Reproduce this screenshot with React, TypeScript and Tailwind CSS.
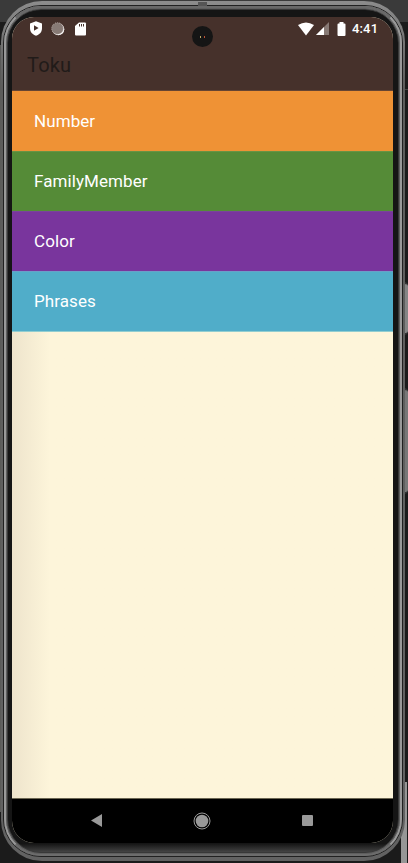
import React from "react";

const rows = [
  { label: "Number", style: "bg-[#ef9235] border-[#ef9235]" },
  { label: "FamilyMember", style: "bg-[#558b37] border-[#689344]" },
  { label: "Color", style: "bg-[#79359d] border-[#79449b]" },
  { label: "Phrases", style: "bg-[#50adc9] border-[#6a9fc8]" },
];

function StatusBar() {
  return (
    <div className="flex h-[23px] items-center text-white">
      <svg className="ml-[17px] h-[15px] w-[14px]" viewBox="0 0 14 15">
        <path d="M7 .3 13 2.500V7c0 4-2.3 6.500-6 7.700C3.300 13.500 1 11 1 7V2.500Z" fill="#fff" />
        <path d="M5 4.300v5.500L9.600 7Z" fill="#46312b" />
      </svg>
      <svg className="ml-[8px] h-[14px] w-[14px]" viewBox="0 0 14 14">
        <circle cx="7.300" cy="7.300" r="6" fill="#fff" />
        <circle cx="6.500" cy="6.500" r="5.800" fill="#877a75" stroke="#b8aca7" strokeWidth="1" strokeDasharray="1 1" />
      </svg>
      <svg className="ml-[10px] h-[14px] w-[12px]" viewBox="0 0 12 14">
        <path d="M4 .500h6q1 0 1 1v11q0 1-1 1h-9q-1 0-1-1V4Z" fill="#fff" />
        <path d="M4.500 2v2.500M6.500 2v2.500M8.500 2v2.500" stroke="#46312b" />
      </svg>
      <svg className="ml-auto h-[14px] w-[16px]" viewBox="0 0 16 14">
        <path d="M0 3Q8-2 16 3L8 13.500Z" fill="#fff" />
      </svg>
      <svg className="ml-[2px] h-[13px] w-[13px]" viewBox="0 0 13 13">
        <path d="M13 0v13H0Z" fill="#877a75" />
        <path d="M8 5v8H0Z" fill="#fff" />
      </svg>
      <svg className="ml-[8px] h-[14px] w-[9px]" viewBox="0 0 9 14">
        <path d="M2.500 0h4v1.500h1q1 0 1 1V13q0 1-1 1h-6q-1 0-1-1V2.500q0-1 1-1h1Z" fill="#fff" />
      </svg>
      <span className="mr-[15px] ml-[6px] w-[26px] whitespace-nowrap text-[13px] leading-[16px] font-medium tracking-[0.15px]">4:41</span>
    </div>
  );
}

export default function App() {
  return (
    <div className="relative h-[863px] w-[408px] overflow-hidden bg-[#1b1b1b] font-[Roboto,sans-serif]">
      <div className="absolute top-0 left-0 h-[22px] w-full bg-[#3a3a3a]" />
      <div className="absolute top-[45px] left-0 h-[767px] w-[4px] bg-[#5b5b59]" />
      <div className="absolute top-[89px] left-[404px] h-px w-[4px] bg-[#444]" />
      <div className="absolute top-[282px] left-[403px] h-[53px] w-[5px] rounded-r-sm border-y-2 border-[#343434] bg-[#858585]" />
      <div className="absolute top-[388px] left-[403px] h-[106px] w-[5px] rounded-r-sm border-y-2 border-[#343434] bg-[#777]" />
      <div className="absolute top-[782px] left-[401px] h-[81px] w-[6px] bg-[#969696]" />

      <div className="relative top-px ml-px h-[860px] w-[404px] rounded-[41px] bg-linear-to-b from-[#8c8c8c] via-[#5c5c5b] via-10% to-[#626262] px-[2px] py-[4px]">
        <div className="h-full rounded-[38px] border border-[#202020]">
          <div className="h-full rounded-[37px] border-2 border-x-[#999] border-t-[#686868] border-b-[#6c6c6c]">
            <div className="h-full rounded-[35px] border border-[#5e5e5e]">
              <div className="h-full rounded-[34px] border border-[#383838] bg-linear-to-b from-[#151515] from-99% to-[#444] pt-[7px] pr-[5px] pb-[9px] pl-[4px]">
                <main className="flex h-[826px] w-[381px] flex-col overflow-hidden rounded-[22px] bg-[#fdf5da]">
                  <header className="h-[74px] border-b border-[#654433] bg-[#46312b]">
                    <StatusBar />
                    <h1 className="pt-[11px] pl-[15px] text-[20px] leading-[28px] tracking-[0.2px] text-[#211b19]">Toku</h1>
                  </header>
                  <div className="flex grow flex-col bg-linear-to-r from-[#eee4cc] via-[#fdf5da] via-10% to-[#fdf5da]">
                    {rows.map((row) => (
                      <div key={row.label} className={`flex h-[60px] items-center border-t pl-[22px] text-[17px] tracking-[0.08px] text-white ${row.style}`}>
                        {row.label}
                      </div>
                    ))}
                    <div className="h-px bg-[#91cdd0]" />
                  </div>
                  <nav className="flex h-[45px] items-center border-t border-[#6b6652] bg-black pb-px">
                    <svg className="ml-[79px] h-[13px] w-[11px]" viewBox="0 0 11 13"><path d="M11 0v13L0 6.500Z" fill="#999" /></svg>
                    <svg className="ml-[91px] h-[18px] w-[18px]" viewBox="0 0 18 18"><circle cx="9" cy="9" r="8" fill="none" stroke="#999" /><circle cx="9" cy="9" r="6.300" fill="#999" /></svg>
                    <div className="ml-[91px] h-[11px] w-[11px] rounded-[1px] bg-[#999]" />
                  </nav>
                </main>
              </div>
            </div>
          </div>
        </div>
      </div>
      <div className="absolute top-[26px] left-[192px] flex h-[21px] w-[21px] items-center justify-center gap-[3px] rounded-full bg-[#151515]">
        <div className="h-[2px] w-px bg-[#bba864]" />
        <div className="h-[2px] w-px bg-[#bd5135]" />
      </div>
      <div className="absolute top-[2px] left-[198px] h-[4px] w-[9px] bg-[#555]" />
    </div>
  );
}
